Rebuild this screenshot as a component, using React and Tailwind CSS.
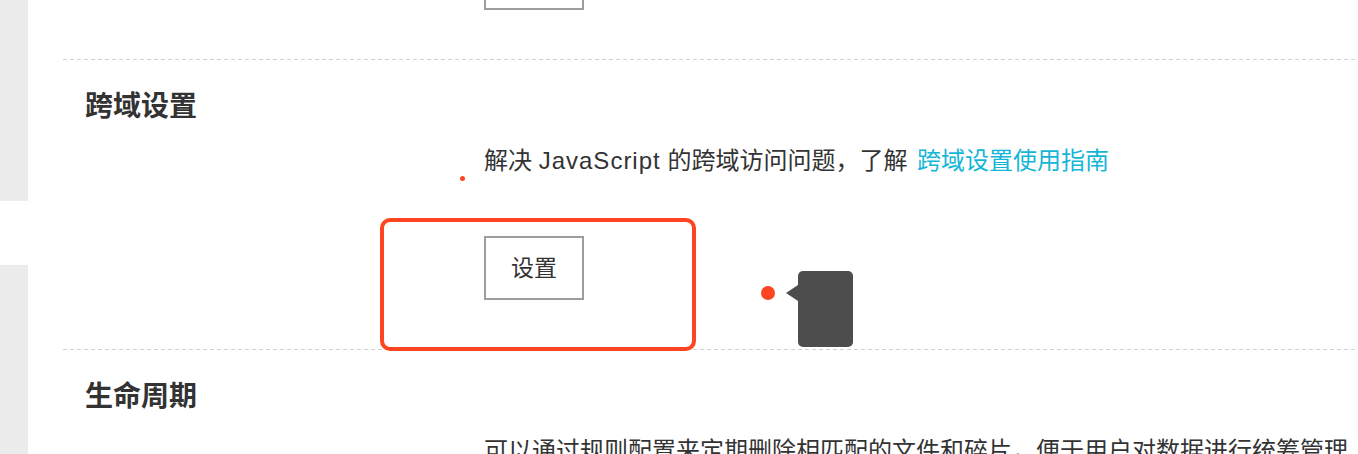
import React from 'react';

const font = { fontFamily: '"Liberation Sans", "Noto Sans CJK SC", sans-serif' };

const Dashed = ({ className = '' }) => (
  <div className={`h-px bg-[linear-gradient(to_right,#d0d0d0_4px,transparent_4px)] bg-[length:7px_1px] ${className}`} />
);

const SetButton = ({ className = '' }) => (
  <button className={`flex h-[64px] w-[100px] items-center justify-center border-2 border-[#9a9ea1] bg-white text-[23px] text-[#333] ${className}`}>
    设置
  </button>
);

const Section = ({ title, children }) => (
  <div className="px-[22px]">
    <h2 className="mt-[29px] h-[36px] text-[28px] font-bold leading-[36px] text-[#333]">{title}</h2>
    <div className="ml-[399px] mt-[20px]">{children}</div>
  </div>
);

export default function App() {
  return (
    <div className="relative flex h-[454px] w-[1358px] overflow-hidden bg-white" style={font}>
      {/* left rail */}
      <div className="flex w-[28px] shrink-0 flex-col">
        <div className="h-[201px] bg-[#ebeceb]" />
        <div className="h-[64px] bg-white" />
        <div className="flex-1 bg-[#ebeceb]" />
      </div>

      <div className="flex-1 pl-[35px]">
        {/* tail of the previous section */}
        <div className="px-[22px]">
          <SetButton className="-mt-[54px] ml-[399px]" />
        </div>
        <Dashed className="mt-[49px]" />

        <Section title="跨域设置">
          <p className="h-[32px] whitespace-nowrap text-[24px] leading-[32px] text-[#333]">
            解决 <span className="tracking-[1px]">JavaScript</span> 的跨域访问问题，了解{' '}
            <a className="ml-[3px] text-[#14b6d7]">跨域设置使用指南</a>
          </p>
          <SetButton className="mt-[59px]" />
        </Section>
        <Dashed className="mt-[49px]" />

        <Section title="生命周期">
          <p className="h-[32px] whitespace-nowrap text-[24px] leading-[32px] text-[#333]">
            可以通过规则配置来定期删除相匹配的文件和碎片，便于用户对数据进行统筹管理
          </p>
        </Section>
      </div>

      {/* annotation overlay */}
      <div className="absolute left-[380px] top-[218px] h-[133px] w-[316px] rounded-[10px] border-4 border-[#fd4621]" />
      <div className="absolute left-[460px] top-[176px] h-[5px] w-[5px] rounded-full bg-[#fd4621]" />
      <div className="absolute left-[761px] top-[286px] h-[14px] w-[14px] rounded-full bg-[#fd4621]" />
      <div className="absolute left-[798px] top-[271px] h-[76px] w-[55px] rounded-[5px] bg-[#4d4d4d]">
        <div className="absolute -left-[12px] top-[14px] h-0 w-0 border-y-[8px] border-r-[12px] border-y-transparent border-r-[#4d4d4d]" />
      </div>
    </div>
  );
}
